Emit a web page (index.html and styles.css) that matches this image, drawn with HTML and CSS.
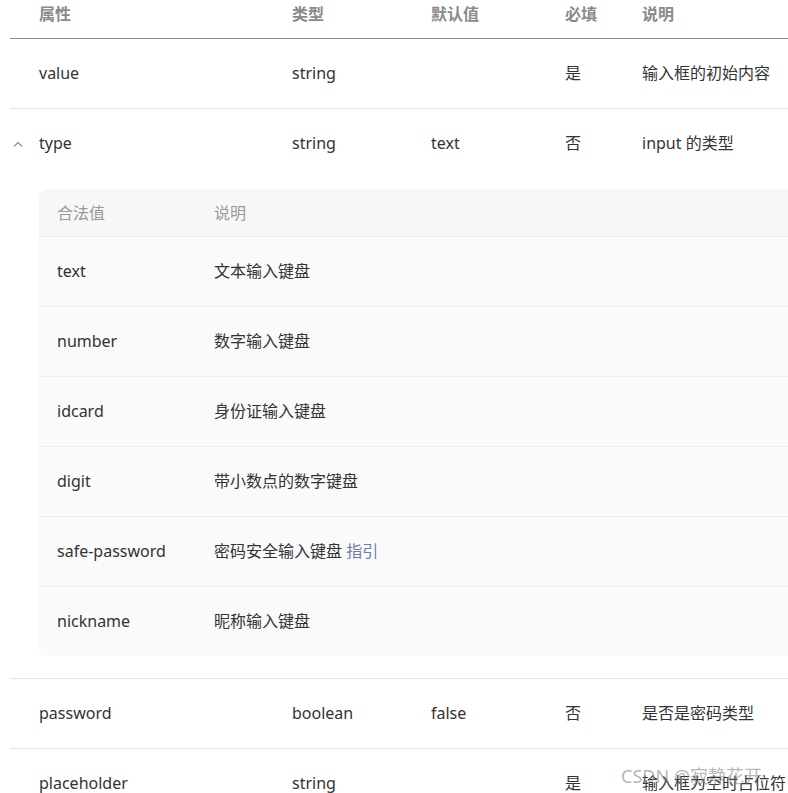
FILE: index.html
```html
<!DOCTYPE html>
<html lang="zh-CN">
<head>
<meta charset="utf-8">
<title>input 属性</title>
<link rel="stylesheet" href="styles.css">
</head>
<body>
<div class="table">
  <div class="row head">
    <div class="cell first">属性</div>
    <div class="cell">类型</div>
    <div class="cell">默认值</div>
    <div class="cell">必填</div>
    <div class="cell">说明</div>
  </div>
  <div class="row">
    <div class="cell first">value</div>
    <div class="cell">string</div>
    <div class="cell"></div>
    <div class="cell">是</div>
    <div class="cell">输入框的初始内容</div>
  </div>
  <div class="group">
    <div class="row plain">
      <div class="cell first"><svg class="caret" width="10" height="6" viewBox="0 0 10 6"><path d="M1 5.5 L5 1.5 L9 5.5" fill="none" stroke="#888" stroke-width="1.1"/></svg>type</div>
      <div class="cell">string</div>
      <div class="cell">text</div>
      <div class="cell">否</div>
      <div class="cell">input 的类型</div>
    </div>
    <div class="expand">
      <div class="inner">
        <div class="irow ihead">
          <div class="icell ifirst">合法值</div>
          <div class="icell">说明</div>
        </div>
        <div class="irow"><div class="icell ifirst">text</div><div class="icell">文本输入键盘</div></div>
        <div class="irow"><div class="icell ifirst">number</div><div class="icell">数字输入键盘</div></div>
        <div class="irow"><div class="icell ifirst">idcard</div><div class="icell">身份证输入键盘</div></div>
        <div class="irow"><div class="icell ifirst">digit</div><div class="icell">带小数点的数字键盘</div></div>
        <div class="irow"><div class="icell ifirst">safe-password</div><div class="icell">密码安全输入键盘 <a class="link" href="#">指引</a></div></div>
        <div class="irow last"><div class="icell ifirst">nickname</div><div class="icell">昵称输入键盘</div></div>
      </div>
    </div>
  </div>
  <div class="row">
    <div class="cell first">password</div>
    <div class="cell">boolean</div>
    <div class="cell">false</div>
    <div class="cell">否</div>
    <div class="cell">是否是密码类型</div>
  </div>
  <div class="row">
    <div class="cell first">placeholder</div>
    <div class="cell">string</div>
    <div class="cell"></div>
    <div class="cell">是</div>
    <div class="cell">输入框为空时占位符</div>
  </div>
</div>
<div class="watermark">CSDN @寂静花开</div>
</body>
</html>
```
FILE: styles.css
```css
html, body {
  margin: 0;
  padding: 0;
  overflow: hidden;
  background: #fff;
}
body {
  font-family: "Noto Sans", "Noto Sans CJK SC", sans-serif;
  font-size: 16px;
  color: #333;
  position: relative;
  height: 793px;
}
.table {
  margin-left: 10px;
  width: 778px;
}
.row {
  display: grid;
  grid-template-columns: 282px 139px 134px 77px 1fr;
  height: 67px;
  padding-bottom: 2px;
  align-items: center;
  border-bottom: 1px solid #e5e5e5;
}
.row.plain {
  border-bottom: none;
  height: 68px;
}
.row.head {
  height: 24px;
  padding: 2px 0 12px;
  border-bottom: 1px solid #8a8a8a;
  color: #8a8a8a;
  font-weight: 700;
}
.cell {
  white-space: nowrap;
  line-height: 24px;
}
.cell.first {
  padding-left: 29px;
  position: relative;
}
.caret {
  position: absolute;
  left: 3px;
  top: 10px;
}
.group {
  border-bottom: 1px solid #e5e5e5;
}
.expand {
  padding: 10px 0 22px 29px;
}
.inner {
  background: #fafafa;
  border-radius: 8px 0 0 8px;
}
.irow {
  display: grid;
  grid-template-columns: 175px 1fr;
  height: 67px;
  padding-bottom: 2px;
  align-items: center;
  border-bottom: 1px solid #ececec;
}
.irow.last {
  border-bottom: none;
}
.irow.ihead {
  height: 47px;
  padding-bottom: 0;
  background: #f7f7f7;
  color: #999;
  border-radius: 8px 0 0 0;
}
.icell {
  white-space: nowrap;
  line-height: 24px;
}
.icell.ifirst {
  padding-left: 18px;
}
.link {
  color: #6a80a9;
  text-decoration: none;
}
.watermark {
  position: absolute;
  left: 621px;
  top: 762px;
  font-size: 18px;
  color: rgba(120, 120, 120, 0.55);
  white-space: nowrap;
}
```
